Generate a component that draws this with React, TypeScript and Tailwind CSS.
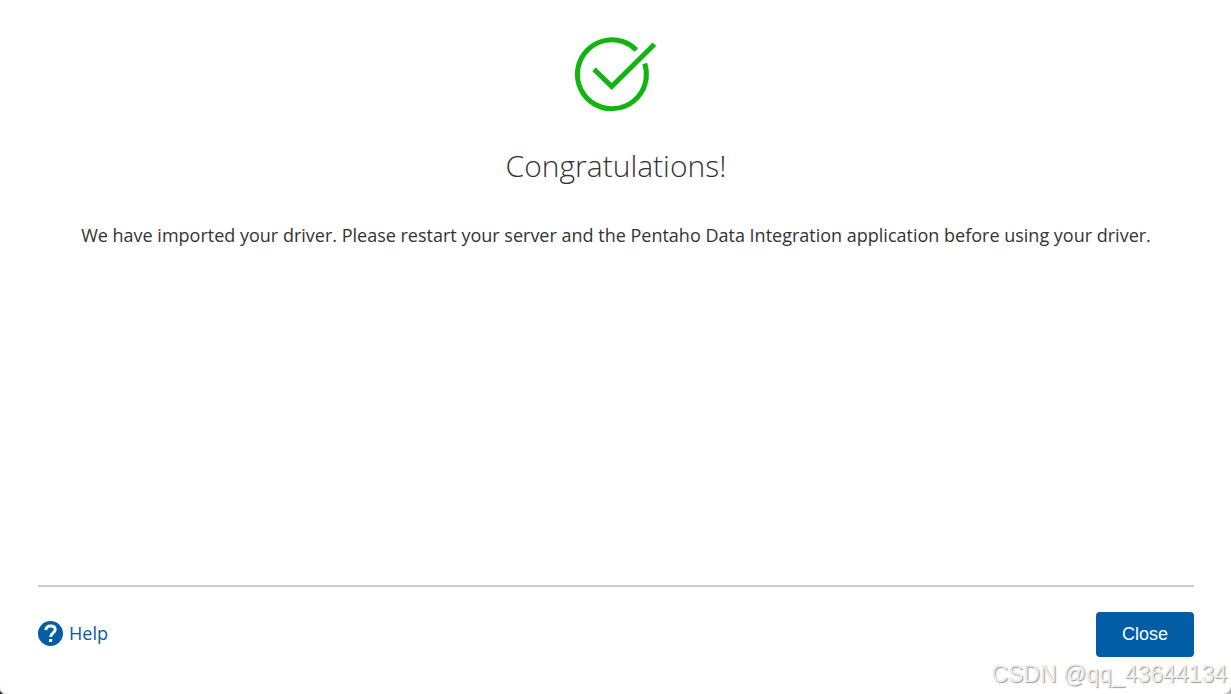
function SuccessIcon() {
  return (
    <svg width="84" height="76" viewBox="0 0 84 76" fill="none" stroke="#10b510" strokeWidth="5" aria-hidden="true">
      <path d="M62.3 13.9A34.5 34.5 0 1 0 70.7 27.6" />
      <path d="M20 33.2L37.7 50.6L80.4 8.2" />
    </svg>
  );
}

function HelpIcon() {
  return (
    <svg width="25" height="25" viewBox="0 0 25 25" aria-hidden="true">
      <circle cx="12.5" cy="12.5" r="12.5" fill="#005da6" />
      <path
        d="M7.8 9.2C8 6.4 9.8 5 12.6 5C15.4 5 17.2 6.4 17.2 8.8C17.2 11.8 12.6 12 12.6 16"
        fill="none"
        stroke="#fff"
        strokeWidth="3"
      />
      <rect x="11" y="18" width="3.2" height="3" fill="#fff" />
    </svg>
  );
}

export default function App() {
  return (
    <div className="relative flex min-h-screen flex-col overflow-hidden bg-white pr-[37px] pl-[38px] font-['Open_Sans',sans-serif] text-[#333]">
      <main className="flex flex-1 flex-col items-center pt-9 text-center">
        <SuccessIcon />
        <h1 className="mt-8 text-[30px] leading-[44px] font-light">Congratulations!</h1>
        <p className="mt-[35px] text-lg leading-6">
          We have imported your driver. Please restart your server and the Pentaho Data Integration application before
          using your driver.
        </p>
      </main>
      <footer className="flex items-start justify-between border-t-2 border-[#ccc] pt-[25px] pb-[37px]">
        <a href="#help" className="flex items-start gap-1.5 pt-[9px] text-lg leading-6 text-[#005da6]">
          <HelpIcon />
          Help
        </a>
        <button
          type="button"
          className="h-[45px] w-[98px] rounded bg-[#005da6] pb-0.5 font-['Liberation_Sans',sans-serif] text-lg text-white"
        >
          Close
        </button>
      </footer>
      <span className="absolute right-1 bottom-1.5 font-['Liberation_Sans',sans-serif] text-[23px] leading-7 text-[#eee] [text-shadow:1px_1px_1px_#999]">
        CSDN @qq_43644134
      </span>
      <svg className="absolute bottom-0 left-0" width="8" height="8" viewBox="0 0 8 8" aria-hidden="true">
        <path d="M0 0Q0 8 8 8H0Z" fill="#ccc" />
        <path d="M0 5L3 8H0Z" fill="#333" />
      </svg>
      <svg className="absolute right-0 bottom-0" width="8" height="8" viewBox="0 0 8 8" aria-hidden="true">
        <path d="M8 0Q7 7 0 8H8Z" fill="#bbb" />
      </svg>
    </div>
  );
}
